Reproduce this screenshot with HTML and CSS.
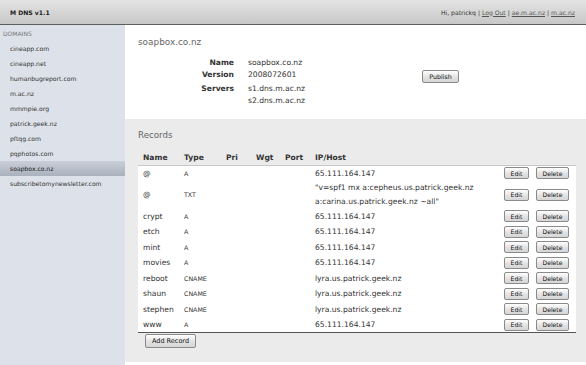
FILE: index.html
```html
<!DOCTYPE html>
<html>
<head>
<meta charset="utf-8">
<title>M DNS v1.1</title>
<link rel="stylesheet" href="styles.css">
</head>
<body>
<header class="topbar">
  <span class="brand">M DNS v1.1</span>
  <nav class="user">Hi, patrickq | <a href="#">Log Out</a> | <a href="#">ae.m.ac.nz</a> | <a href="#">m.ac.nz</a></nav>
</header>
<div class="layout">
  <aside class="sidebar">
    <div class="side-title">DOMAINS</div>
    <ul class="domains">
      <li>cineapp.com</li>
      <li>cineapp.net</li>
      <li>humanbugreport.com</li>
      <li>m.ac.nz</li>
      <li>mmmpie.org</li>
      <li>patrick.geek.nz</li>
      <li>pftqg.com</li>
      <li>pqphotos.com</li>
      <li class="selected">soapbox.co.nz</li>
      <li>subscribetomynewsletter.com</li>
    </ul>
  </aside>
  <main class="content">
    <section class="summary">
      <h1 class="domain-title">soapbox.co.nz</h1>
      <div class="summary-body">
        <dl class="info">
          <dt>Name</dt><dd>soapbox.co.nz</dd>
          <dt>Version</dt><dd>2008072601</dd>
          <dt class="servers">Servers</dt><dd class="servers">s1.dns.m.ac.nz<br>s2.dns.m.ac.nz</dd>
        </dl>
        <button class="btn publish">Publish</button>
      </div>
    </section>
    <section class="records">
      <h2 class="records-title">Records</h2>
      <table class="rec-table">
        <colgroup>
          <col class="c-name"><col class="c-type"><col class="c-pri"><col class="c-wgt"><col class="c-port"><col class="c-host"><col class="c-act">
        </colgroup>
        <thead>
          <tr><th>Name</th><th>Type</th><th>Pri</th><th>Wgt</th><th>Port</th><th>IP/Host</th><th></th></tr>
        </thead>
        <tbody>
          <tr><td>@</td><td class="type">A</td><td></td><td></td><td></td><td>65.111.164.147</td><td class="act"><button class="btn edit">Edit</button><button class="btn del">Delete</button></td></tr>
          <tr class="tall"><td>@</td><td class="type">TXT</td><td></td><td></td><td></td><td class="txt">"v=spf1 mx a:cepheus.us.patrick.geek.nz a:carina.us.patrick.geek.nz ~all"</td><td class="act"><button class="btn edit">Edit</button><button class="btn del">Delete</button></td></tr>
          <tr><td>crypt</td><td class="type">A</td><td></td><td></td><td></td><td>65.111.164.147</td><td class="act"><button class="btn edit">Edit</button><button class="btn del">Delete</button></td></tr>
          <tr><td>etch</td><td class="type">A</td><td></td><td></td><td></td><td>65.111.164.147</td><td class="act"><button class="btn edit">Edit</button><button class="btn del">Delete</button></td></tr>
          <tr><td>mint</td><td class="type">A</td><td></td><td></td><td></td><td>65.111.164.147</td><td class="act"><button class="btn edit">Edit</button><button class="btn del">Delete</button></td></tr>
          <tr><td>movies</td><td class="type">A</td><td></td><td></td><td></td><td>65.111.164.147</td><td class="act"><button class="btn edit">Edit</button><button class="btn del">Delete</button></td></tr>
          <tr><td>reboot</td><td class="type">CNAME</td><td></td><td></td><td></td><td>lyra.us.patrick.geek.nz</td><td class="act"><button class="btn edit">Edit</button><button class="btn del">Delete</button></td></tr>
          <tr><td>shaun</td><td class="type">CNAME</td><td></td><td></td><td></td><td>lyra.us.patrick.geek.nz</td><td class="act"><button class="btn edit">Edit</button><button class="btn del">Delete</button></td></tr>
          <tr><td>stephen</td><td class="type">CNAME</td><td></td><td></td><td></td><td>lyra.us.patrick.geek.nz</td><td class="act"><button class="btn edit">Edit</button><button class="btn del">Delete</button></td></tr>
          <tr><td>www</td><td class="type">A</td><td></td><td></td><td></td><td>65.111.164.147</td><td class="act"><button class="btn edit">Edit</button><button class="btn del">Delete</button></td></tr>
        </tbody>
      </table>
      <button class="btn add">Add Record</button>
    </section>
  </main>
</div>
</body>
</html>
```
FILE: styles.css
```css
* { box-sizing: border-box; }
html, body { margin: 0; padding: 0; }
body {
  font-family: "DejaVu Sans", Verdana, sans-serif;
  color: #222;
  background: #fff;
  width: 586px;
  height: 365px;
  overflow: hidden;
}

.topbar {
  height: 25px;
  display: flex;
  align-items: center;
  justify-content: space-between;
  padding: 0 11px 0 10px;
  background: linear-gradient(#e4e4e4, #c7c7c7);
  border-bottom: 1px solid #5e5e5e;
}
.brand {
  font-weight: bold;
  font-size: 6.1px;
  color: #222;
}
.user {
  font-size: 6.1px;
  color: #333;
}
.user a { color: #555; text-decoration: underline; }

.layout {
  display: flex;
  height: 340px;
}

.sidebar {
  width: 125px;
  flex: none;
  background: #dde1e9;
}
.side-title {
  height: 15.5px;
  padding: 4px 0 0 3px;
  font-size: 6px;
  color: #777;
  line-height: 9px;
}
.domains {
  list-style: none;
  margin: 0;
  padding: 0;
}
.domains li {
  height: 15px;
  line-height: 15px;
  padding-left: 10px;
  font-size: 6.1px;
  color: #333;
}
.domains li.selected {
  background: linear-gradient(#c9cfd8, #a9b1bd);
  color: #222;
}

.content {
  flex: 1;
  display: flex;
  flex-direction: column;
  background: #fff;
}

.summary {
  height: 94px;
  padding: 11px 0 0 13px;
  background: #fff;
}
.domain-title {
  margin: 0;
  font-weight: normal;
  font-size: 8.9px;
  line-height: 12px;
  color: #666;
}
.summary-body {
  display: flex;
  margin-top: 9px;
}
.info {
  margin: 0;
  width: 284px;
  display: grid;
  grid-template-columns: 96px auto;
  column-gap: 14px;
  font-size: 7.6px;
  line-height: 11.5px;
  align-content: start;
}
.info dt {
  text-align: right;
  font-weight: bold;
  color: #333;
}
.info dd { margin: 0; color: #333; }
.info .servers { margin-top: 3px; }

.btn {
  font-family: "DejaVu Sans", Verdana, sans-serif;
  font-size: 6.1px;
  color: #111;
  background: linear-gradient(#ffffff, #e2e2e2 55%, #d6d6d6);
  border: 1px solid #8a8a8a;
  border-radius: 2px;
  padding: 0;
  line-height: 9px;
  cursor: pointer;
}
.publish {
  width: 37px;
  height: 13px;
  margin-top: 13px;
  font-size: 6.3px;
}

.records {
  flex: 1;
  background: #ebebeb;
  padding: 10px 10px 0 13px;
  margin-bottom: 3px;
}
.records-title {
  margin: 0 0 10px 0;
  font-weight: normal;
  font-size: 8.7px;
  line-height: 12px;
  color: #666;
}

.rec-table {
  width: 438px;
  table-layout: fixed;
  border-collapse: collapse;
  font-size: 7.6px;
  color: #333;
}
.c-name { width: 41px; }
.c-type { width: 42px; }
.c-pri { width: 30px; }
.c-wgt { width: 29px; }
.c-port { width: 30px; }
.c-host { width: 192px; }
.c-act { width: 74px; }

.rec-table th {
  height: 14px;
  padding: 0 0 0 5px;
  text-align: left;
  font-weight: bold;
  color: #333;
  border-bottom: 1px solid #c8c8c8;
  vertical-align: middle;
}
.rec-table tbody { background: #fff; }
.rec-table tbody tr:last-child td { border-bottom: 1px solid #555; }
.rec-table td {
  height: 15.5px;
  padding: 0 0 0 5px;
  vertical-align: middle;
  white-space: nowrap;
}
.rec-table tr.tall td { height: 26px; }
.rec-table td.txt {
  white-space: normal;
  line-height: 14px;
  padding-right: 10px;
}
.rec-table td.type { font-size: 6.3px; }
.rec-table td.act {
  padding: 0 7px 0 0;
  text-align: right;
}
.edit {
  width: 25px;
  height: 12px;
  margin-right: 7px;
  vertical-align: middle;
}
.del {
  width: 33px;
  height: 12px;
  vertical-align: middle;
}
.add {
  display: block;
  width: 51px;
  height: 14px;
  margin: 1px 0 0 7px;
  font-size: 6.5px;
}
```
